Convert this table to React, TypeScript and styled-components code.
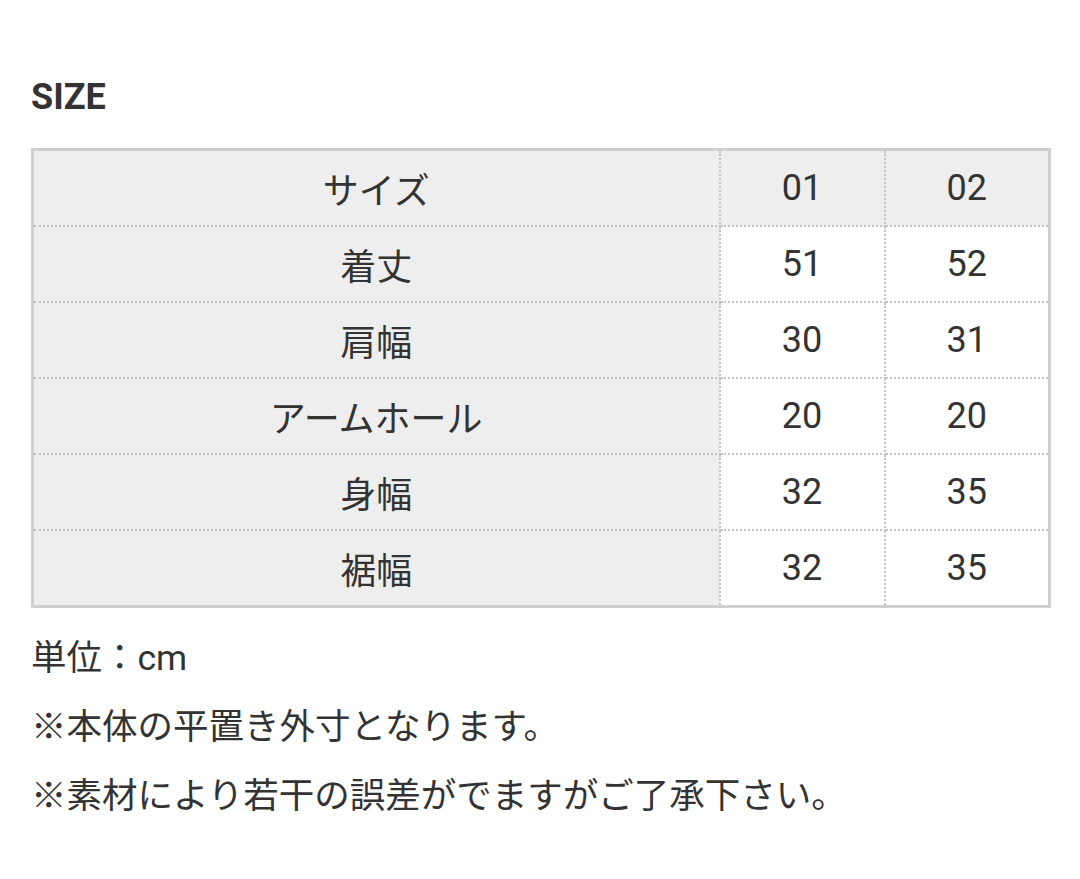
import React from 'react'
import styled, { createGlobalStyle } from 'styled-components'

const GlobalStyle = createGlobalStyle`
  body {
    margin: 0;
    background: #fff;
    font-family: Roboto, "Noto Sans CJK JP", sans-serif;
    color: #333;
  }
`

const Page = styled.div`
  padding: 78px 31px 0 31px;
  width: 1018px;
`

const Title = styled.h2`
  margin: 0 0 32px 0;
  font-size: 36px;
  font-weight: 700;
  line-height: 38px;
  color: #333;
`

const Table = styled.table`
  width: 1018px;
  border-collapse: collapse;
  border: 3px solid #cfcfcf;
  table-layout: fixed;
`

const Cell = `
  height: 74px;
  padding: 0;
  text-align: center;
  vertical-align: middle;
  font-size: 36px;
  font-weight: 400;
  color: #333;
  border: 2px dotted #c4c4c4;
`

const Th = styled.th`
  ${Cell}
  background-color: #eeeeee;
`

const Td = styled.td<{ $head?: boolean }>`
  ${Cell}
  background-color: ${(p) => (p.$head ? '#eeeeee' : '#ffffff')};
`

const Notes = styled.div`
  margin-top: 28px;
  font-size: 35.5px;
  line-height: 44px;
`

const Note = styled.p`
  margin: 0 0 25px 0;
`

const rows: [string, string, string][] = [
  ['着丈', '51', '52'],
  ['肩幅', '30', '31'],
  ['アームホール', '20', '20'],
  ['身幅', '32', '35'],
  ['裾幅', '32', '35'],
]

export default () => (
  <Page>
    <GlobalStyle />
    <Title>SIZE</Title>
    <Table>
      <colgroup>
        <col style={{ width: 687 }} />
        <col style={{ width: 165 }} />
        <col style={{ width: 165 }} />
      </colgroup>
      <thead>
        <tr>
          <Th>サイズ</Th>
          <Th>01</Th>
          <Th>02</Th>
        </tr>
      </thead>
      <tbody>
        {rows.map(([name, a, b]) => (
          <tr key={name}>
            <Td $head>{name}</Td>
            <Td>{a}</Td>
            <Td>{b}</Td>
          </tr>
        ))}
      </tbody>
    </Table>
    <Notes>
      <Note>単位：cm</Note>
      <Note>※本体の平置き外寸となります。</Note>
      <Note>※素材により若干の誤差がでますがご了承下さい。</Note>
    </Notes>
  </Page>
)
